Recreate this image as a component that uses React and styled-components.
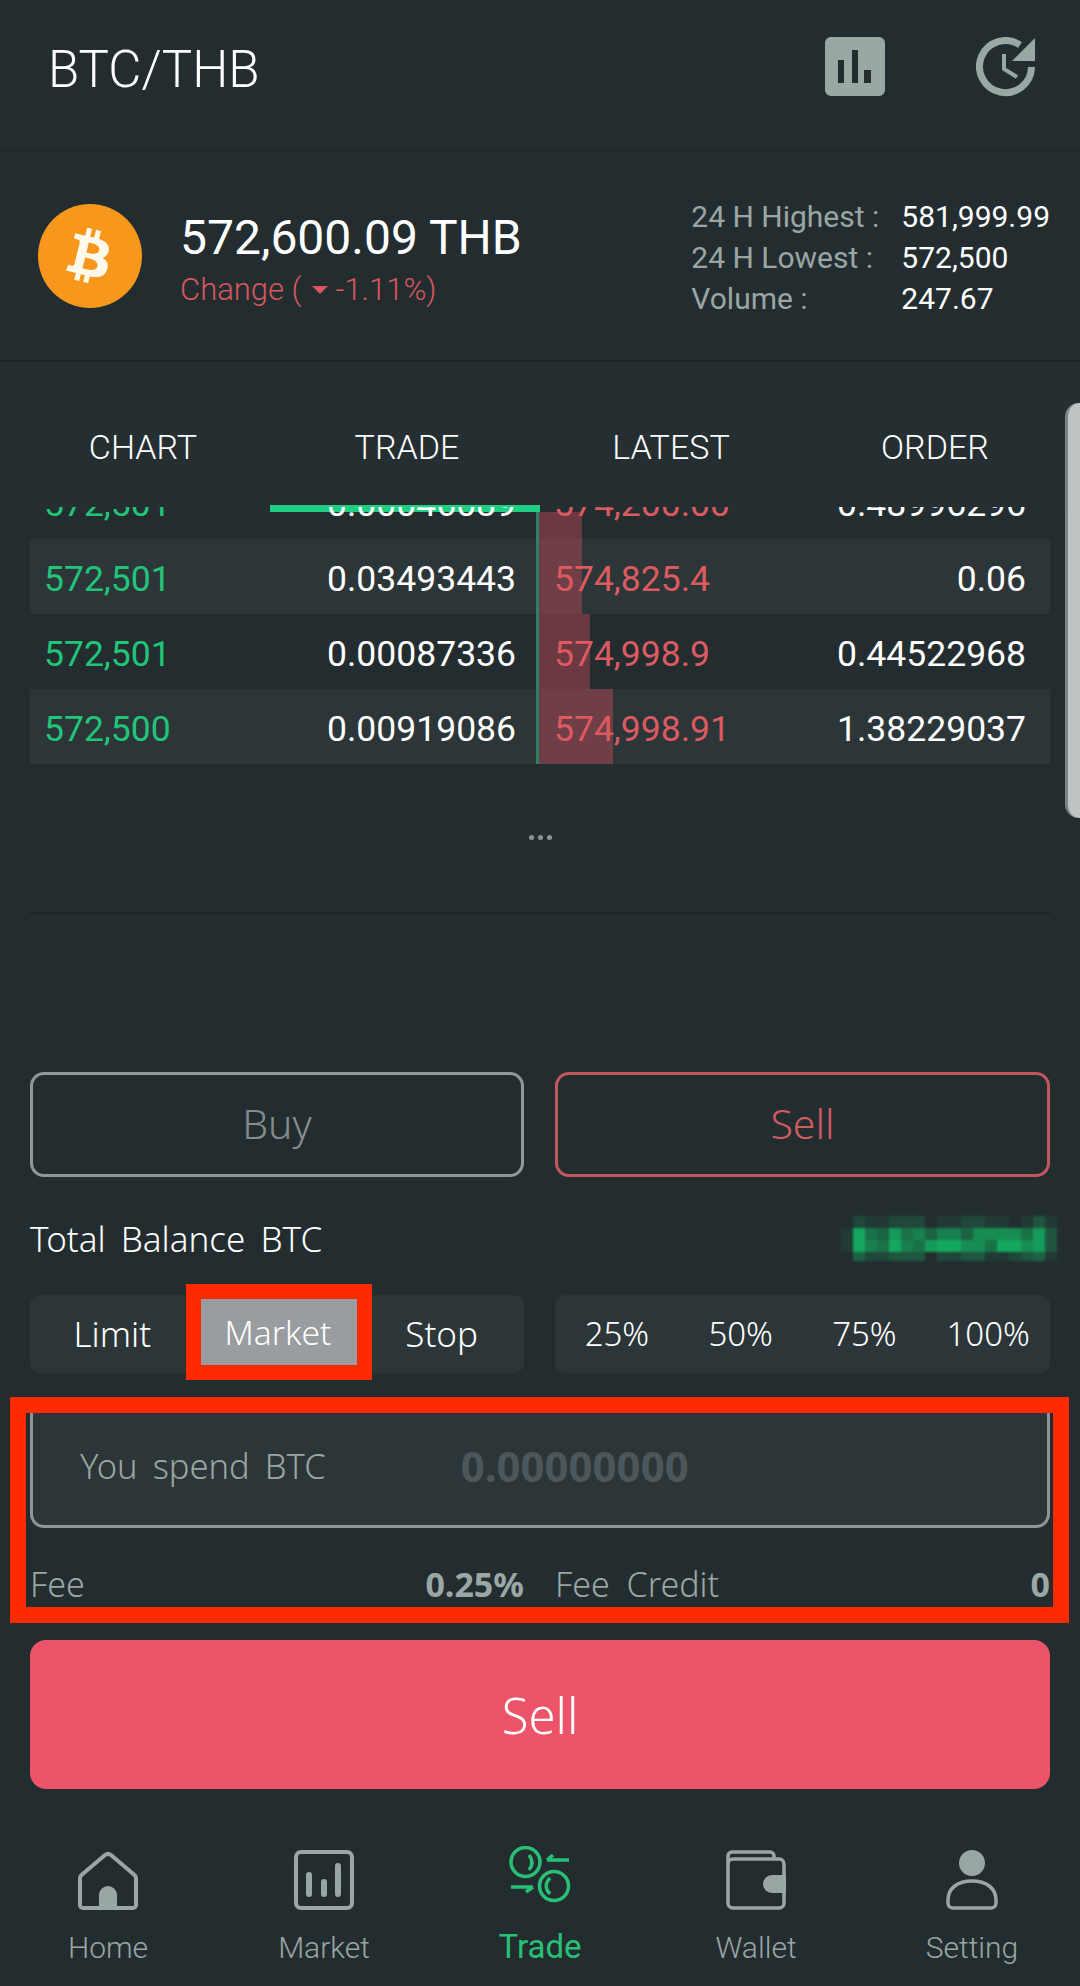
import React from "react";
import styled, { createGlobalStyle } from "styled-components";
import { FaBtc } from "react-icons/fa";

const GlobalStyle = createGlobalStyle`
  html, body { margin: 0; padding: 0; background: #232d30; }
  * { box-sizing: border-box; }
`;

const Page = styled.div`
  position: relative;
  width: 1080px;
  height: 1986px;
  overflow: hidden;
  background: #232d30;
  font-family: Roboto, "Liberation Sans", sans-serif;
  color: #fff;
`;

const Header = styled.header`
  height: 152px;
  padding: 0 44px 16px 48px;
  display: flex;
  align-items: center;
  justify-content: space-between;
  border-bottom: 2px solid #20292c;
`;

const Title = styled.h1`
  margin: 0;
  padding-top: 4px;
  font-size: 51px;
  font-weight: 300;
`;

const HeaderIcons = styled.div`
  display: flex;
  gap: 91px;
`;

const Ticker = styled.section`
  height: 210px;
  padding: 0 30px 0 38px;
  display: flex;
  align-items: center;
  border-bottom: 2px solid #1c2426;
`;

const Coin = styled.div`
  width: 104px;
  height: 104px;
  border-radius: 50%;
  background: #f7981d;
  color: #fff9ec;
  display: flex;
  align-items: center;
  justify-content: center;

  svg {
    transform: rotate(14deg);
  }
`;

const PriceBlock = styled.div`
  flex: 1;
  margin-left: 38px;
  padding-top: 8px;
`;

const Price = styled.div`
  font-size: 48px;
  line-height: 54px;
`;

const Change = styled.div`
  display: flex;
  align-items: center;
  font-size: 31px;
  line-height: 38px;
  margin-top: 6px;
  color: #d9575c;
  font-weight: 300;
`;

const Caret = styled.i`
  width: 0;
  height: 0;
  margin: 0 8px 0 10px;
  border-style: solid;
  border-width: 8px 8px 0;
  border-color: #d9575c transparent transparent;
`;

const Stats = styled.div`
  display: grid;
  grid-template-columns: 210px auto;
  row-gap: 5px;
  padding-top: 4px;
`;

const StatLabel = styled.span`
  font-size: 30px;
  line-height: 36px;
  color: #9aa6a3;
`;

const StatValue = styled.span`
  font-size: 30px;
  line-height: 36px;
`;

const Tabs = styled.nav`
  position: relative;
  z-index: 1;
  height: 150px;
  padding: 20px 13px 0 11px;
  display: grid;
  grid-template-columns: repeat(4, 264px);
  background: #252f32;
`;

const Tab = styled.div`
  display: flex;
  align-items: center;
  justify-content: center;
  font-size: 34px;
  font-weight: 300;
`;

const TabMarker = styled.div`
  position: absolute;
  left: 270px;
  bottom: 0;
  width: 270px;
  height: 7px;
  background: #1fd082;
`;

const TableView = styled.div`
  height: 257px;
  margin: -5px 30px 0;
  overflow: hidden;
`;

const TableScroll = styled.div`
  margin-top: -43px;
`;

const Row = styled.div`
  position: relative;
  height: 75px;
  display: grid;
  grid-template-columns: 1fr 1fr;
  background: ${(p) => (p.$stripe ? "#2c3638" : "transparent")};
`;

const BookSide = styled.div`
  display: flex;
  align-items: center;
  justify-content: space-between;
  padding: 4px 24px 0 14px;
  font-size: 35.5px;
  position: relative;
  z-index: 1;
`;

const Bid = styled.span`
  color: #22c578;
`;

const Ask = styled.span`
  color: #dd5a60;
`;

const DepthBar = styled.div`
  position: absolute;
  top: 0;
  bottom: 0;
  left: 506px;
  background: rgba(207, 75, 90, 0.42);
  border-left: 3px solid #2f7f62;
`;

const Dots = styled.div`
  height: 148px;
  display: flex;
  justify-content: center;
  align-items: center;
  gap: 4px;
  padding-bottom: 2px;
`;

const Dot = styled.i`
  width: 5px;
  height: 5px;
  border-radius: 50%;
  background: #8a9596;
`;

const Divider = styled.div`
  height: 2px;
  margin: 0 30px;
  background: #1c2426;
`;

const TradeForm = styled.section`
  padding: 158px 30px 0;
  font-family: "Noto Sans", "Open Sans", sans-serif;
  font-weight: 300;
`;

const SideGrid = styled.div`
  display: grid;
  grid-template-columns: 494px 495px;
  column-gap: 31px;
`;

const SideButton = styled.div`
  height: 105px;
  border: 3px solid ${(p) => (p.$sell ? "#c2585d" : "#92979a")};
  border-radius: 14px;
  display: flex;
  align-items: center;
  justify-content: center;
  font-size: 41px;
  padding-bottom: 4px;
  color: ${(p) => (p.$sell ? "#d05b60" : "#858c8e")};
`;

const BalanceRow = styled.div`
  height: 118px;
  padding-top: 4px;
  display: flex;
  align-items: center;
  justify-content: space-between;
  font-size: 35px;
  word-spacing: 6px;
`;

const Segment = styled.div`
  height: 78px;
  border-radius: 10px;
  background: #2c3638;
  display: grid;
  grid-template-columns: repeat(${(p) => p.$cols}, 1fr);
  align-items: center;
  justify-items: center;
  padding-bottom: 2px;
  font-size: ${(p) => p.$size}px;
`;

const MarketChip = styled.div`
  position: relative;
  width: 156px;
  height: 66px;
  margin: 0 0 2px 5px;
  padding-right: 3px;
  display: flex;
  align-items: center;
  justify-content: center;
  font-size: 33.5px;
  background: #9a9da0;
  outline: 15px solid #ff2b00;
`;

const FeeBlock = styled.div`
  position: relative;
  margin-top: 27px;
`;

const SpendInput = styled.div`
  height: 128px;
  padding: 5px 47px 0;
  display: flex;
  align-items: center;
  background: #2c3638;
  border: 3px solid #8f9496;
  border-top: none;
  border-radius: 0 0 14px 14px;
  font-size: 34.5px;
  word-spacing: 6px;
  color: #9aa6a3;
`;

const SpendValue = styled.b`
  margin-left: 135px;
  font-size: 42px;
  font-weight: 700;
  color: #4d5759;
`;

const FeeRow = styled.div`
  height: 79px;
  padding-top: 33px;
  display: flex;
  align-items: center;
  justify-content: space-between;
  font-size: 34px;
  word-spacing: 8px;
  color: #9ba7a4;
`;

const FeeValue = styled.b`
  font-size: 34px;
  font-weight: 700;
`;

const Annotation = styled.div`
  position: absolute;
  left: -20px;
  right: -19px;
  top: -3px;
  bottom: -16px;
  border: 16px solid #ff2b00;
`;

const SubmitButton = styled.div`
  height: 149px;
  margin-top: 33px;
  border-radius: 16px;
  background: #ee5469;
  display: flex;
  align-items: center;
  justify-content: center;
  font-size: 49px;
`;

const BottomNav = styled.nav`
  position: absolute;
  left: 0;
  right: 0;
  top: 1846px;
  display: grid;
  grid-template-columns: repeat(5, 216px);
`;

const NavItem = styled.div`
  display: flex;
  flex-direction: column;
  align-items: center;
  line-height: 36px;
  color: ${(p) => (p.$active ? "#28c076" : "#9aa6a3")};
  font-size: ${(p) => (p.$active ? "33px" : "30px")};
  font-weight: ${(p) => (p.$active ? 400 : 300)};
`;

const NavIcon = styled.div`
  height: 64px;
  display: flex;
  align-items: ${(p) => (p.$top ? "flex-start" : "flex-end")};
  margin-bottom: ${(p) => (p.$top ? 19 : 20)}px;
`;

const ScrollHandle = styled.div`
  position: absolute;
  right: 0;
  top: 403px;
  width: 15px;
  height: 415px;
  background: #bec3c3;
  border-left: 3px solid #7d8586;
  border-radius: 14px 0 0 14px;
  z-index: 2;
`;

const MosaicFrame = styled.svg`
  margin-right: -7px;
  filter: blur(0.8px);
`;

const rows = [
  ["572,501", "0.00046089", "574,200.00", "0.48996296", 46, false],
  ["572,501", "0.03493443", "574,825.4", "0.06", 46, true],
  ["572,501", "0.00087336", "574,998.9", "0.44522968", 54, false],
  ["572,500", "0.00919086", "574,998.91", "1.38229037", 77, true],
];

const ChartIcon = () => (
  <svg width="60" height="60" viewBox="0 0 60 60">
    <path fill="#9aa8a4" fillRule="evenodd" d="M6 0h48a6 6 0 0 1 6 6v47a6 6 0 0 1-6 6H6a6 6 0 0 1-6-6V6a6 6 0 0 1 6-6zM13 23v23h6V23zM27 13v33h6V13zM39 33v13h7V33z" />
  </svg>
);

const HistoryIcon = () => (
  <svg width="60" height="60" viewBox="0 0 60 60">
    <path fill="none" stroke="#9aa8a4" strokeWidth="7" d="M55.500 30A26 26 0 1 1 44 8" />
    <path fill="#9aa8a4" d="M59 1v23H36z" />
    <path fill="none" stroke="#9aa8a4" strokeWidth="4" d="M28 17v15l13 8" />
  </svg>
);

const HomeIcon = () => (
  <svg width="60" height="60" viewBox="0 0 60 60">
    <path fill="none" stroke="#9aa6a3" strokeWidth="4" strokeLinejoin="round" d="M2 28a4 4 0 0 1 1.500-3L27 5a5 5 0 0 1 6 0l23.500 20a4 4 0 0 1 1.500 3v27a3 3 0 0 1-3 3H5a3 3 0 0 1-3-3z" />
    <path fill="#9aa6a3" d="M21 58V45a9 9 0 0 1 18 0v13z" />
  </svg>
);

const MarketIcon = () => (
  <svg width="60" height="60" viewBox="0 0 60 60">
    <rect x="2" y="2" width="56" height="56" rx="5" fill="none" stroke="#9aa6a3" strokeWidth="4" />
    <path stroke="#9aa6a3" strokeWidth="6" strokeLinecap="round" d="M15 25v19M30 32v12M44 16v28" />
  </svg>
);

const TradeIcon = () => (
  <svg width="62" height="58" viewBox="0 0 62 58" fill="none" stroke="#28c076" strokeWidth="3.5">
    <circle cx="16.500" cy="16" r="14.500" />
    <circle cx="45" cy="40" r="14.500" />
    <path d="M20 9c4 5 4 10 0 15M41 32c-5 5-5 11 0 16" />
    <path d="M38 14h22M38 14l6-5M2 41h22M24 41l-7 5" />
  </svg>
);

const WalletIcon = () => (
  <svg width="60" height="60" viewBox="0 0 60 60" fill="none" stroke="#9aa6a3" strokeWidth="3.5">
    <path d="M2 14V6a4 4 0 0 1 4-4h38a4 4 0 0 1 4 4v3" />
    <rect x="2" y="9" width="56" height="49" rx="5" />
    <path fill="#9aa6a3" stroke="none" d="M60 25H46a9 9 0 0 0 0 18h14z" />
  </svg>
);

const UserIcon = () => (
  <svg width="52" height="60" viewBox="0 0 52 60">
    <circle cx="26" cy="13" r="13" fill="#9aa6a3" />
    <path fill="none" stroke="#9aa6a3" strokeWidth="3.5" d="M2 50C2 38 12 31 26 31s24 7 24 19v3a5 5 0 0 1-5 5H7a5 5 0 0 1-5-5z" />
  </svg>
);

// the blurred-out balance is a mosaic, so it is drawn rather than typed
const mosaic = [
  "021122201122110131",
  "195485646647777583",
  "196596589977599783",
  "042233302233112341",
];

const BalanceMosaic = () => (
  <MosaicFrame width="216" height="45" viewBox="0 0 216 45" shapeRendering="crispEdges">
    {mosaic.flatMap((line, y) =>
      [...line].map((c, x) => (
        <rect key={`${x}-${y}`} x={x * 12} y={y * 12} width="12" height={y === 3 ? 9 : 12} fill="#14a85e" opacity={Number(c) / 9} />
      ))
    )}
  </MosaicFrame>
);

export default function App() {
  return (
    <Page>
      <GlobalStyle />
      <Header>
        <Title>BTC/THB</Title>
        <HeaderIcons>
          <ChartIcon />
          <HistoryIcon />
        </HeaderIcons>
      </Header>
      <Ticker>
        <Coin>
          <FaBtc size={54} />
        </Coin>
        <PriceBlock>
          <Price>572,600.09 THB</Price>
          <Change>
            Change (<Caret />-1.11%)
          </Change>
        </PriceBlock>
        <Stats>
          <StatLabel>24 H Highest :</StatLabel>
          <StatValue>581,999.99</StatValue>
          <StatLabel>24 H Lowest :</StatLabel>
          <StatValue>572,500</StatValue>
          <StatLabel>Volume :</StatLabel>
          <StatValue>247.67</StatValue>
        </Stats>
      </Ticker>
      <Tabs>
        <Tab>CHART</Tab>
        <Tab>TRADE</Tab>
        <Tab>LATEST</Tab>
        <Tab>ORDER</Tab>
        <TabMarker />
      </Tabs>
      <TableView>
        <TableScroll>
          {rows.map(([bid, bidAmount, ask, askAmount, depth, stripe], i) => (
            <Row key={i} $stripe={stripe}>
              <DepthBar style={{ width: depth }} />
              <BookSide>
                <Bid>{bid}</Bid>
                <span>{bidAmount}</span>
              </BookSide>
              <BookSide>
                <Ask>{ask}</Ask>
                <span>{askAmount}</span>
              </BookSide>
            </Row>
          ))}
        </TableScroll>
      </TableView>
      <Dots>
        <Dot />
        <Dot />
        <Dot />
      </Dots>
      <Divider />
      <TradeForm>
        <SideGrid>
          <SideButton>Buy</SideButton>
          <SideButton $sell>Sell</SideButton>
        </SideGrid>
        <BalanceRow>
          Total Balance BTC
          <BalanceMosaic />
        </BalanceRow>
        <SideGrid>
          <Segment $cols={3} $size={35}>
            <span>Limit</span>
            <MarketChip>Market</MarketChip>
            <span>Stop</span>
          </Segment>
          <Segment $cols={4} $size={33}>
            <span>25%</span>
            <span>50%</span>
            <span>75%</span>
            <span>100%</span>
          </Segment>
        </SideGrid>
        <FeeBlock>
          <SpendInput>
            You spend BTC
            <SpendValue>0.00000000</SpendValue>
          </SpendInput>
          <SideGrid>
            <FeeRow>
              Fee
              <FeeValue>0.25%</FeeValue>
            </FeeRow>
            <FeeRow>
              Fee Credit
              <FeeValue>0</FeeValue>
            </FeeRow>
          </SideGrid>
          <Annotation />
        </FeeBlock>
        <SubmitButton>Sell</SubmitButton>
      </TradeForm>
      <BottomNav>
        <NavItem>
          <NavIcon>
            <HomeIcon />
          </NavIcon>
          Home
        </NavItem>
        <NavItem>
          <NavIcon>
            <MarketIcon />
          </NavIcon>
          Market
        </NavItem>
        <NavItem $active>
          <NavIcon $top>
            <TradeIcon />
          </NavIcon>
          Trade
        </NavItem>
        <NavItem>
          <NavIcon>
            <WalletIcon />
          </NavIcon>
          Wallet
        </NavItem>
        <NavItem>
          <NavIcon>
            <UserIcon />
          </NavIcon>
          Setting
        </NavItem>
      </BottomNav>
      <ScrollHandle />
    </Page>
  );
}
